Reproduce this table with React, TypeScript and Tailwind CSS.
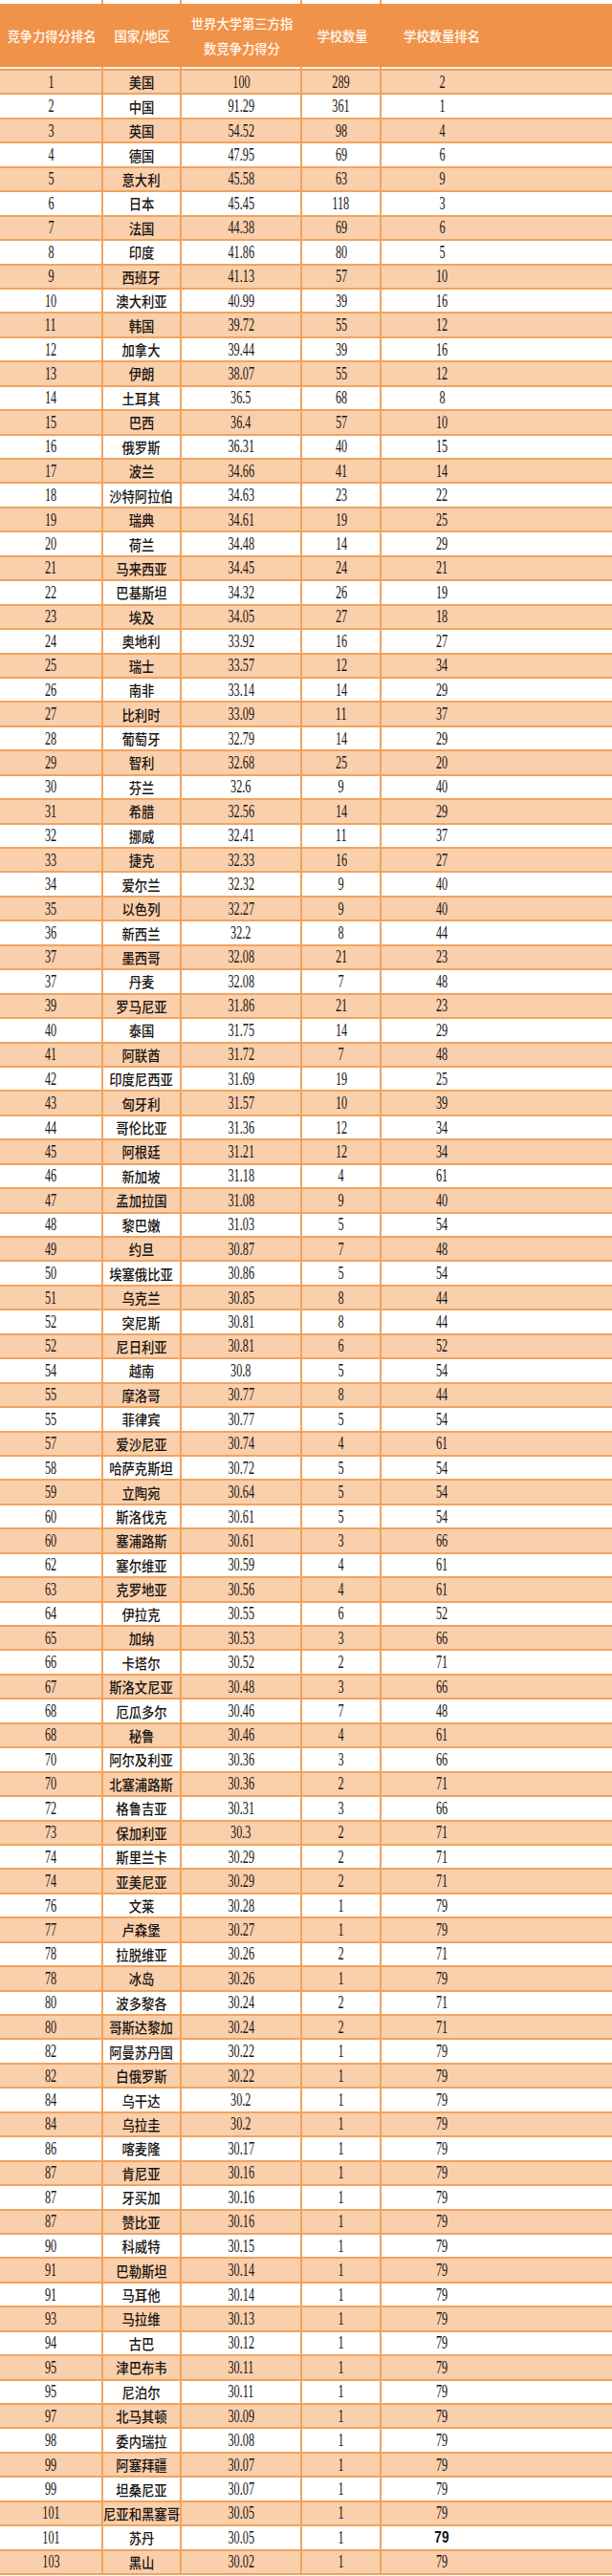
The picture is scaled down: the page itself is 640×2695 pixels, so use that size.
import React from 'react';

type Row = [string, string, string, string, string];

// 竞争力得分排名, 国家/地区, 得分, 学校数量, 学校数量排名
const rows: Row[] = [
  ['1', '美国', '100', '289', '2'],
  ['2', '中国', '91.29', '361', '1'],
  ['3', '英国', '54.52', '98', '4'],
  ['4', '德国', '47.95', '69', '6'],
  ['5', '意大利', '45.58', '63', '9'],
  ['6', '日本', '45.45', '118', '3'],
  ['7', '法国', '44.38', '69', '6'],
  ['8', '印度', '41.86', '80', '5'],
  ['9', '西班牙', '41.13', '57', '10'],
  ['10', '澳大利亚', '40.99', '39', '16'],
  ['11', '韩国', '39.72', '55', '12'],
  ['12', '加拿大', '39.44', '39', '16'],
  ['13', '伊朗', '38.07', '55', '12'],
  ['14', '土耳其', '36.5', '68', '8'],
  ['15', '巴西', '36.4', '57', '10'],
  ['16', '俄罗斯', '36.31', '40', '15'],
  ['17', '波兰', '34.66', '41', '14'],
  ['18', '沙特阿拉伯', '34.63', '23', '22'],
  ['19', '瑞典', '34.61', '19', '25'],
  ['20', '荷兰', '34.48', '14', '29'],
  ['21', '马来西亚', '34.45', '24', '21'],
  ['22', '巴基斯坦', '34.32', '26', '19'],
  ['23', '埃及', '34.05', '27', '18'],
  ['24', '奥地利', '33.92', '16', '27'],
  ['25', '瑞士', '33.57', '12', '34'],
  ['26', '南非', '33.14', '14', '29'],
  ['27', '比利时', '33.09', '11', '37'],
  ['28', '葡萄牙', '32.79', '14', '29'],
  ['29', '智利', '32.68', '25', '20'],
  ['30', '芬兰', '32.6', '9', '40'],
  ['31', '希腊', '32.56', '14', '29'],
  ['32', '挪威', '32.41', '11', '37'],
  ['33', '捷克', '32.33', '16', '27'],
  ['34', '爱尔兰', '32.32', '9', '40'],
  ['35', '以色列', '32.27', '9', '40'],
  ['36', '新西兰', '32.2', '8', '44'],
  ['37', '墨西哥', '32.08', '21', '23'],
  ['37', '丹麦', '32.08', '7', '48'],
  ['39', '罗马尼亚', '31.86', '21', '23'],
  ['40', '泰国', '31.75', '14', '29'],
  ['41', '阿联酋', '31.72', '7', '48'],
  ['42', '印度尼西亚', '31.69', '19', '25'],
  ['43', '匈牙利', '31.57', '10', '39'],
  ['44', '哥伦比亚', '31.36', '12', '34'],
  ['45', '阿根廷', '31.21', '12', '34'],
  ['46', '新加坡', '31.18', '4', '61'],
  ['47', '孟加拉国', '31.08', '9', '40'],
  ['48', '黎巴嫩', '31.03', '5', '54'],
  ['49', '约旦', '30.87', '7', '48'],
  ['50', '埃塞俄比亚', '30.86', '5', '54'],
  ['51', '乌克兰', '30.85', '8', '44'],
  ['52', '突尼斯', '30.81', '8', '44'],
  ['52', '尼日利亚', '30.81', '6', '52'],
  ['54', '越南', '30.8', '5', '54'],
  ['55', '摩洛哥', '30.77', '8', '44'],
  ['55', '菲律宾', '30.77', '5', '54'],
  ['57', '爱沙尼亚', '30.74', '4', '61'],
  ['58', '哈萨克斯坦', '30.72', '5', '54'],
  ['59', '立陶宛', '30.64', '5', '54'],
  ['60', '斯洛伐克', '30.61', '5', '54'],
  ['60', '塞浦路斯', '30.61', '3', '66'],
  ['62', '塞尔维亚', '30.59', '4', '61'],
  ['63', '克罗地亚', '30.56', '4', '61'],
  ['64', '伊拉克', '30.55', '6', '52'],
  ['65', '加纳', '30.53', '3', '66'],
  ['66', '卡塔尔', '30.52', '2', '71'],
  ['67', '斯洛文尼亚', '30.48', '3', '66'],
  ['68', '厄瓜多尔', '30.46', '7', '48'],
  ['68', '秘鲁', '30.46', '4', '61'],
  ['70', '阿尔及利亚', '30.36', '3', '66'],
  ['70', '北塞浦路斯', '30.36', '2', '71'],
  ['72', '格鲁吉亚', '30.31', '3', '66'],
  ['73', '保加利亚', '30.3', '2', '71'],
  ['74', '斯里兰卡', '30.29', '2', '71'],
  ['74', '亚美尼亚', '30.29', '2', '71'],
  ['76', '文莱', '30.28', '1', '79'],
  ['77', '卢森堡', '30.27', '1', '79'],
  ['78', '拉脱维亚', '30.26', '2', '71'],
  ['78', '冰岛', '30.26', '1', '79'],
  ['80', '波多黎各', '30.24', '2', '71'],
  ['80', '哥斯达黎加', '30.24', '2', '71'],
  ['82', '阿曼苏丹国', '30.22', '1', '79'],
  ['82', '白俄罗斯', '30.22', '1', '79'],
  ['84', '乌干达', '30.2', '1', '79'],
  ['84', '乌拉圭', '30.2', '1', '79'],
  ['86', '喀麦隆', '30.17', '1', '79'],
  ['87', '肯尼亚', '30.16', '1', '79'],
  ['87', '牙买加', '30.16', '1', '79'],
  ['87', '赞比亚', '30.16', '1', '79'],
  ['90', '科威特', '30.15', '1', '79'],
  ['91', '巴勒斯坦', '30.14', '1', '79'],
  ['91', '马耳他', '30.14', '1', '79'],
  ['93', '马拉维', '30.13', '1', '79'],
  ['94', '古巴', '30.12', '1', '79'],
  ['95', '津巴布韦', '30.11', '1', '79'],
  ['95', '尼泊尔', '30.11', '1', '79'],
  ['97', '北马其顿', '30.09', '1', '79'],
  ['98', '委内瑞拉', '30.08', '1', '79'],
  ['99', '阿塞拜疆', '30.07', '1', '79'],
  ['99', '坦桑尼亚', '30.07', '1', '79'],
  ['101', '尼亚和黑塞哥', '30.05', '1', '79'],
  ['101', '苏丹', '30.05', '1', '79'],
  ['103', '黑山', '30.02', '1', '79'],
];

function Num({ children, bold = false }: { children: React.ReactNode; bold?: boolean }) {
  if (bold) {
    return (
      <span className="inline-block scale-x-[0.85] whitespace-nowrap font-['Liberation_Sans',sans-serif] text-[16px] font-bold leading-none text-[#111111]">
        {children}
      </span>
    );
  }
  return (
    <span className="inline-block scale-x-[0.68] whitespace-nowrap font-['Liberation_Serif',serif] text-[18px] leading-none text-[#1a1410]">
      {children}
    </span>
  );
}

function Name({ children }: { children: React.ReactNode }) {
  return (
    <span className="inline-block scale-x-[0.89] whitespace-nowrap font-['Noto_Sans_CJK_SC',sans-serif] text-[15px] font-medium leading-none text-[#1a1410]">
      {children}
    </span>
  );
}

function HeadText({ children }: { children: React.ReactNode }) {
  return (
    <span className="inline-block scale-x-[0.95] whitespace-nowrap font-['Noto_Sans_CJK_SC',sans-serif] text-[14px] font-medium leading-[26px] text-[#fffaf0]">
      {children}
    </span>
  );
}

function TableRow({ row, index }: { row: Row; index: number }) {
  const bg = index % 2 === 0 ? 'bg-[#f9cfac]' : 'bg-white';
  const boldLast = index === 101;
  return (
    <div className={`flex h-[25.44px] border-b-2 border-[#f2a35e] ${bg}`}>
      <div className="flex w-[108px] shrink-0 items-center justify-center border-r-2 border-[#f2a35e]">
        <Num>{row[0]}</Num>
      </div>
      <div className="flex w-[82px] shrink-0 items-center justify-center border-r-2 border-[#f2a35e]">
        <Name>{row[1]}</Name>
      </div>
      <div className="flex w-[126px] shrink-0 items-center justify-center border-r-2 border-[#f2a35e]">
        <Num>{row[2]}</Num>
      </div>
      <div className="flex w-[83px] shrink-0 items-center justify-center border-r-2 border-[#f2a35e]">
        <Num>{row[3]}</Num>
      </div>
      <div className="flex flex-1 items-center">
        <div className="flex w-[126px] justify-center">
          <Num bold={boldLast}>{row[4]}</Num>
        </div>
      </div>
    </div>
  );
}

function Strip({ className }: { className: string }) {
  return (
    <div className={`flex ${className}`}>
      <div className="w-[108px] shrink-0 border-r-2 border-[#f2a35e]" />
      <div className="w-[82px] shrink-0 border-r-2 border-[#f2a35e]" />
      <div className="w-[126px] shrink-0 border-r-2 border-[#f2a35e]" />
      <div className="w-[83px] shrink-0 border-r-2 border-[#f2a35e]" />
      <div className="flex-1" />
    </div>
  );
}

export default function App() {
  return (
    <div className="w-[640px] bg-white">
      {/* cut-off row above the header */}
      <Strip className="h-[4px] bg-white" />

      {/* Header */}
      <div className="flex h-[66px] bg-[#f1924a]">
        <div className="flex w-[108px] shrink-0 items-center justify-center">
          <HeadText>竞争力得分排名</HeadText>
        </div>
        <div className="flex w-[82px] shrink-0 items-center justify-center">
          <HeadText>国家/地区</HeadText>
        </div>
        <div className="flex w-[126px] shrink-0 flex-col items-center justify-center">
          <HeadText>世界大学第三方指</HeadText>
          <HeadText>数竞争力得分</HeadText>
        </div>
        <div className="flex w-[83px] shrink-0 items-center justify-center">
          <HeadText>学校数量</HeadText>
        </div>
        <div className="flex flex-1 items-center">
          <div className="flex w-[126px] justify-center">
            <HeadText>学校数量排名</HeadText>
          </div>
        </div>
      </div>

      <Strip className="h-[4px] border-b-2 border-[#f2a35e] bg-[#fdf0e4]" />

      {/* Rows */}
      {rows.map((row, i) => (
        <TableRow key={i} row={row} index={i} />
      ))}
    </div>
  );
}
